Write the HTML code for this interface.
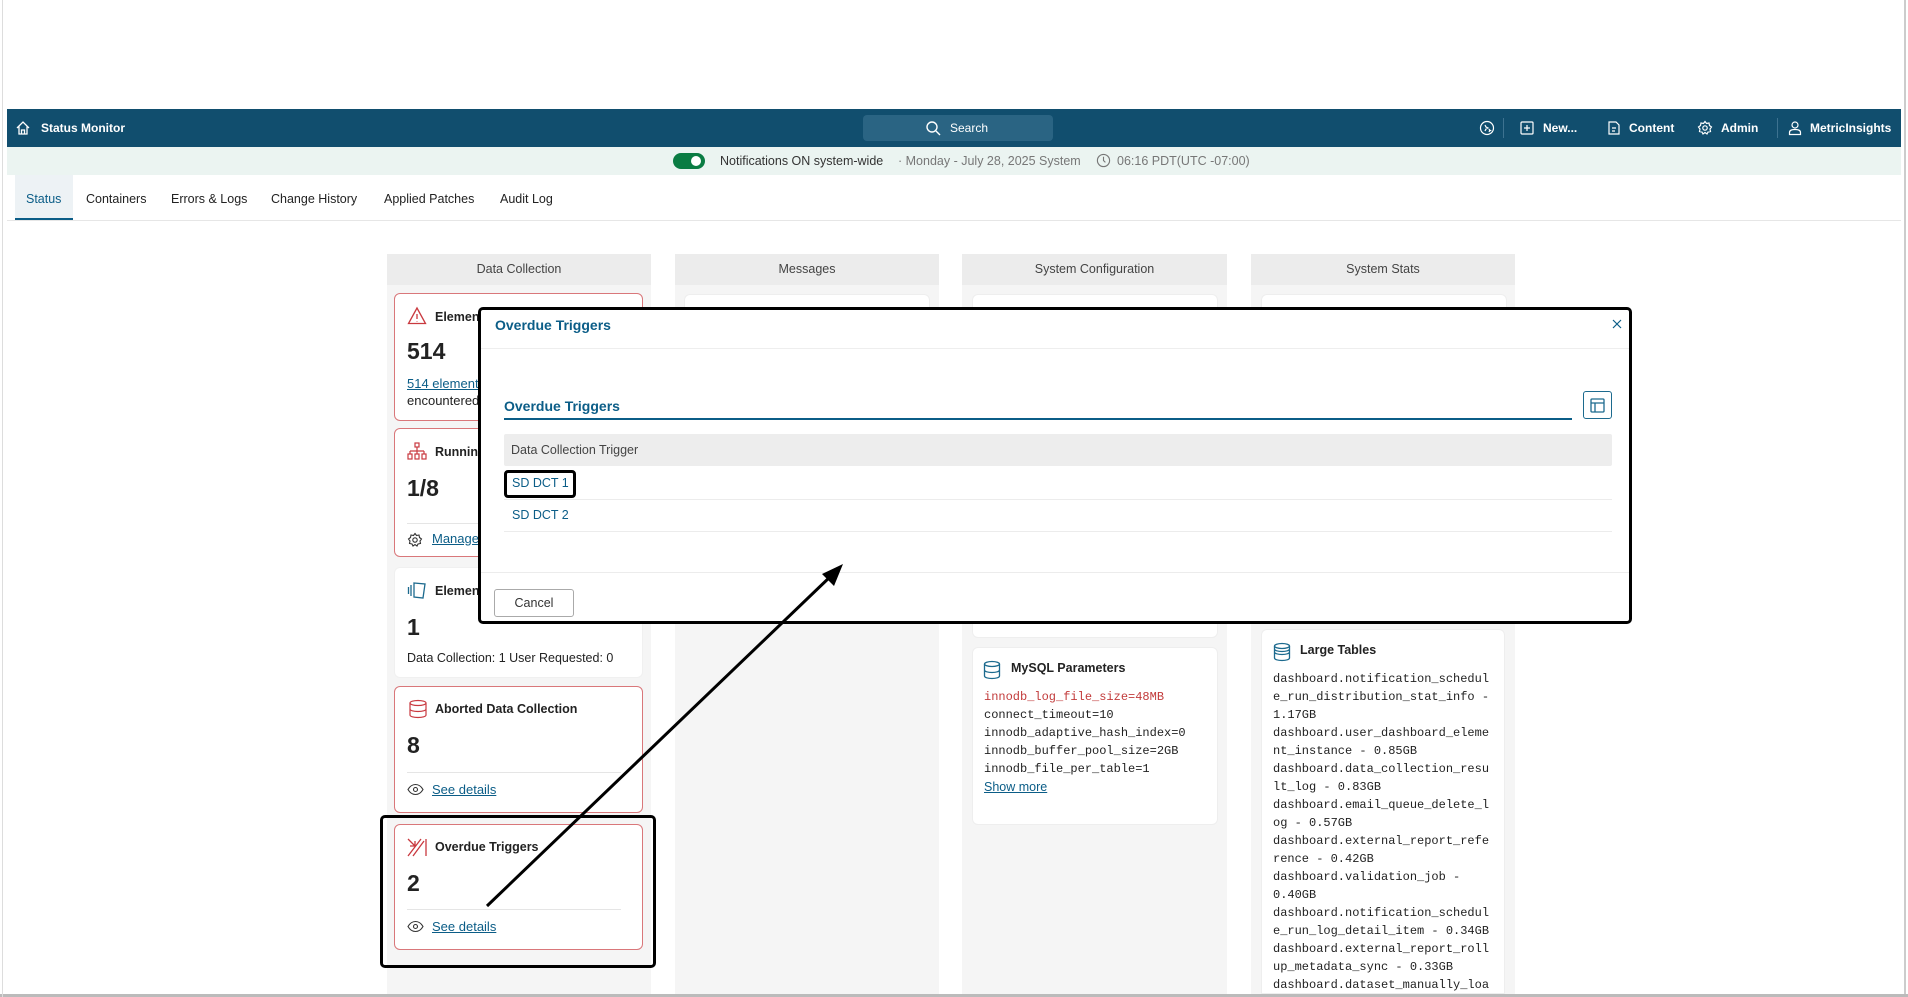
<!DOCTYPE html>
<html><head><meta charset="utf-8"><style>
*{box-sizing:border-box;margin:0;padding:0}
body{width:1908px;height:997px;position:relative;background:#fff;font-family:"Liberation Sans",sans-serif;font-size:13px;color:#222;overflow:hidden}
.a{position:absolute}
.nav{left:7px;top:109px;width:1894px;height:38px;background:#114e6e;color:#fff;font-weight:bold;font-size:12px}
.nav span{position:absolute;top:12px}
.notif{left:7px;top:147px;width:1894px;height:28px;background:#ebf4f1;font-size:12.5px;color:#333}
.tab{top:192px;font-size:12.5px;color:#222}
.col{background:#f5f5f5;width:264px;top:254px;height:740px}
.colh{height:31px;background:#ececec;text-align:center;line-height:31px;font-size:12.5px;color:#444}
.card{background:#fff;border-radius:6px;border:1px solid #eee}
.red{border:1px solid #d9777a}
.ct{font-weight:bold;font-size:12.5px;position:absolute;left:40px;top:16px}
.num{position:absolute;left:12px;font-size:23px;font-weight:bold;color:#222}
.lnk{color:#0b5d87;text-decoration:underline}
.mono{font-family:"Liberation Mono",monospace;font-size:12px;line-height:18px;color:#222}
.modal{left:478px;top:307px;width:1154px;height:317px;background:#fff;border:3px solid #000;border-radius:5px}
</style></head><body>
<div class="a" style="left:1904px;top:0;width:2px;height:997px;background:#ccc"></div>
<div class="a" style="left:0;top:994px;width:1908px;height:3px;background:#bbb"></div>
<div class="a" style="left:2px;top:0;width:1px;height:997px;background:#ddd"></div>

<div class="a nav">
<svg class="a" style="left:8px;top:11px" width="16" height="16" viewBox="0 0 16 16" fill="none" stroke="#fff" stroke-width="1.3"><path d="M2 8L8 2l6 6M4 6.5V14h8V6.5M6.5 14v-4h3v4"/></svg>
<span style="left:34px">Status Monitor</span>
<div class="a" style="left:856px;top:6px;width:190px;height:26px;background:#2a6483;border-radius:4px"></div>
<svg class="a" style="left:918px;top:11px" width="16" height="16" viewBox="0 0 16 16" fill="none" stroke="#fff" stroke-width="1.4"><circle cx="7" cy="7" r="5"/><path d="M11 11l4 4"/></svg>
<span style="left:943px;font-weight:normal">Search</span>
<svg class="a" style="left:1472px;top:11px" width="16" height="16" viewBox="0 0 16 16" fill="none" stroke="#fff" stroke-width="1.2"><circle cx="8" cy="8" r="6.5"/><path d="M6 5l1 2 2 1-2 1-1 2M10 9l.5 1 1 .5-1 .5-.5 1"/></svg>
<div class="a" style="left:1496px;top:9px;width:1px;height:20px;background:#3d7290"></div>
<svg class="a" style="left:1512px;top:11px" width="16" height="16" viewBox="0 0 16 16" fill="none" stroke="#fff" stroke-width="1.2"><rect x="2" y="2" width="12" height="12" rx="1"/><path d="M8 5v6M5 8h6"/></svg>
<span style="left:1536px">New...</span>
<svg class="a" style="left:1599px;top:11px" width="16" height="16" viewBox="0 0 16 16" fill="none" stroke="#fff" stroke-width="1.2"><path d="M3 2h7l3 3v9H3zM6 8h4M6 11h3"/></svg>
<span style="left:1622px">Content</span>
<svg class="a" style="left:1690px;top:11px" width="16" height="16" viewBox="0 0 16 16" fill="none" stroke="#fff" stroke-width="1.2"><circle cx="8" cy="8" r="2.2"/><path d="M8 1.5l1.5 2 2.5-.5.5 2.5 2 1.5-1.5 2 .5 2.5-2.5.5-1 2-2-1.5-2 1.5-1-2-2.5-.5.5-2.5L1.5 7l2-1.5L4 3l2.5.5z"/></svg>
<span style="left:1714px">Admin</span>
<div class="a" style="left:1770px;top:9px;width:1px;height:20px;background:#3d7290"></div>
<svg class="a" style="left:1780px;top:11px" width="16" height="16" viewBox="0 0 16 16" fill="none" stroke="#fff" stroke-width="1.2"><circle cx="8" cy="5" r="3"/><path d="M2.5 14.5v-2c0-2 2-3 5.5-3s5.5 1 5.5 3v2z"/></svg>
<span style="left:1803px">MetricInsights</span>
</div>

<div class="a notif">
<div class="a" style="left:666px;top:6px;width:32px;height:16px;background:#0a7c43;border-radius:8px"><div class="a" style="left:18px;top:3px;width:10px;height:10px;background:#fff;border-radius:50%"></div></div>
<span class="a" style="left:713px;top:7px">Notifications ON system-wide</span>
<span class="a" style="left:891px;top:7px;color:#777">· Monday - July 28, 2025 System</span>
<svg class="a" style="left:1089px;top:6px" width="15" height="15" viewBox="0 0 16 16" fill="none" stroke="#777" stroke-width="1.2"><circle cx="8" cy="8" r="6.5"/><path d="M8 4v4l2 2"/></svg>
<span class="a" style="left:1110px;top:7px;color:#777">06:16 PDT(UTC -07:00)</span>
</div>

<div class="a" style="left:15px;top:175px;width:58px;height:45px;background:#edf2f5;border-bottom:2px solid #0b5d87"></div>
<span class="a tab" style="left:26px;color:#0b5d87">Status</span>
<span class="a tab" style="left:86px">Containers</span>
<span class="a tab" style="left:171px">Errors &amp; Logs</span>
<span class="a tab" style="left:271px">Change History</span>
<span class="a tab" style="left:384px">Applied Patches</span>
<span class="a tab" style="left:500px">Audit Log</span>
<div class="a" style="left:7px;top:220px;width:1894px;height:1px;background:#e6e6e6"></div>

<div class="a col" style="left:387px"><div class="colh">Data Collection</div></div>
<div class="a col" style="left:675px;width:264px"><div class="colh">Messages</div></div>
<div class="a col" style="left:962px;width:265px"><div class="colh">System Configuration</div></div>
<div class="a col" style="left:1251px"><div class="colh">System Stats</div></div>

<div class="a card" style="left:684px;top:294px;width:246px;height:30px"></div>
<div class="a card" style="left:972px;top:294px;width:246px;height:30px"></div>
<div class="a card" style="left:1261px;top:294px;width:246px;height:30px"></div>
<div class="a card" style="left:972px;top:600px;width:246px;height:38px"></div>

<div class="a card red" style="left:394px;top:293px;width:249px;height:128px">
<svg class="a" style="left:12px;top:12px" width="20" height="20" viewBox="0 0 20 20" fill="none" stroke="#c9393f" stroke-width="1.3"><path d="M10 2L1.5 17.5h17z"/><path d="M10 8v5M10 15v.5"/></svg>
<span class="ct">Elements</span><span class="num" style="top:44px">514</span>
<span class="a lnk" style="left:12px;top:82px">514 elements</span><span class="a" style="left:12px;top:99px">encountered</span></div>

<div class="a card red" style="left:394px;top:428px;width:249px;height:129px">
<svg class="a" style="left:12px;top:13px" width="20" height="20" viewBox="0 0 20 20" fill="none" stroke="#c9393f" stroke-width="1.2"><rect x="8" y="1" width="4" height="4"/><path d="M10 5v4M3 9h14M3 9v3M10 9v3M17 9v3"/><rect x="1" y="12" width="4" height="5"/><rect x="8" y="12" width="4" height="5"/><rect x="15" y="12" width="4" height="5"/></svg>
<span class="ct">Running</span><span class="num" style="top:46px">1/8</span>
<div class="a" style="left:12px;top:94px;width:214px;height:1px;background:#e5e5e5"></div>
<svg class="a" style="left:12px;top:103px" width="16" height="16" viewBox="0 0 16 16" fill="none" stroke="#333" stroke-width="1.1"><circle cx="8" cy="8" r="2.2"/><path d="M8 1.5l1.5 2 2.5-.5.5 2.5 2 1.5-1.5 2 .5 2.5-2.5.5-1 2-2-1.5-2 1.5-1-2-2.5-.5.5-2.5L1.5 7l2-1.5L4 3l2.5.5z"/></svg>
<span class="a lnk" style="left:37px;top:102px">Manage</span></div>

<div class="a card" style="left:394px;top:567px;width:249px;height:111px;border-color:#f0f0f0">
<svg class="a" style="left:12px;top:12px" width="20" height="20" viewBox="0 0 20 20" fill="none" stroke="#1c6a8e" stroke-width="1.3"><path d="M7 3l11 1-2 14-9-1zM4 5v11M1.5 7v7"/></svg>
<span class="ct">Elements</span><span class="num" style="top:46px">1</span>
<span class="a" style="left:12px;top:83px;font-size:12.5px">Data Collection: 1 User Requested: 0</span></div>

<div class="a card red" style="left:394px;top:686px;width:249px;height:127px">
<svg class="a" style="left:13px;top:12px" width="20" height="20" viewBox="0 0 20 20" fill="none" stroke="#c9393f" stroke-width="1.2"><ellipse cx="10" cy="4" rx="8" ry="2.5"/><path d="M2 4v12c0 1.5 3.5 2.5 8 2.5s8-1 8-2.5V4M2 10c0 1.5 3.5 2.5 8 2.5s8-1 8-2.5"/></svg>
<span class="ct" style="top:15px">Aborted Data Collection</span><span class="num" style="top:45px">8</span>
<div class="a" style="left:12px;top:85px;width:214px;height:1px;background:#e5e5e5"></div>
<svg class="a" style="left:12px;top:96px" width="17" height="13" viewBox="0 0 17 13" fill="none" stroke="#333" stroke-width="1.1"><path d="M1 6.5C3 3 6 1.5 8.5 1.5S14 3 16 6.5C14 10 11 11.5 8.5 11.5S3 10 1 6.5z"/><circle cx="8.5" cy="6.5" r="2"/></svg>
<span class="a lnk" style="left:37px;top:95px">See details</span></div>

<div class="a card red" style="left:394px;top:824px;width:249px;height:126px">
<svg class="a" style="left:12px;top:12px" width="20" height="20" viewBox="0 0 20 20" fill="none" stroke="#c9393f" stroke-width="1.3"><path d="M1 2l7 7M8 4v5H3M1 19L14 2M6 19L17 4M19 2v17"/></svg>
<span class="ct" style="top:15px">Overdue Triggers</span><span class="num" style="top:45px">2</span>
<div class="a" style="left:12px;top:84px;width:214px;height:1px;background:#e5e5e5"></div>
<svg class="a" style="left:12px;top:95px" width="17" height="13" viewBox="0 0 17 13" fill="none" stroke="#333" stroke-width="1.1"><path d="M1 6.5C3 3 6 1.5 8.5 1.5S14 3 16 6.5C14 10 11 11.5 8.5 11.5S3 10 1 6.5z"/><circle cx="8.5" cy="6.5" r="2"/></svg>
<span class="a lnk" style="left:37px;top:94px">See details</span></div>
<div class="a" style="left:380px;top:815px;width:276px;height:153px;border:3px solid #000;border-radius:5px"></div>

<div class="a card" style="left:972px;top:647px;width:246px;height:178px">
<svg class="a" style="left:10px;top:12px" width="18" height="20" viewBox="0 0 18 20" fill="none" stroke="#1c6a8e" stroke-width="1.3"><ellipse cx="9" cy="4" rx="7.5" ry="2.5"/><path d="M1.5 4v12c0 1.5 3.4 2.5 7.5 2.5s7.5-1 7.5-2.5V4M1.5 10c0 1.5 3.4 2.5 7.5 2.5s7.5-1 7.5-2.5"/></svg>
<span class="ct" style="left:38px;top:13px">MySQL Parameters</span>
<div class="a mono" style="left:11px;top:40px"><span style="color:#c23b3b">innodb_log_file_size=48MB</span><br>connect_timeout=10<br>innodb_adaptive_hash_index=0<br>innodb_buffer_pool_size=2GB<br>innodb_file_per_table=1<br><span class="lnk" style="font-family:'Liberation Sans',sans-serif;font-size:12.5px">Show more</span></div></div>

<div class="a card" style="left:1261px;top:629px;width:244px;height:365px;overflow:hidden;border-radius:6px 6px 0 0">
<svg class="a" style="left:11px;top:12px" width="18" height="20" viewBox="0 0 18 20" fill="none" stroke="#1c6a8e" stroke-width="1.3"><ellipse cx="9" cy="4" rx="7.5" ry="2.5"/><path d="M1.5 4v12c0 1.5 3.4 2.5 7.5 2.5s7.5-1 7.5-2.5V4M1.5 10c0 1.5 3.4 2.5 7.5 2.5s7.5-1 7.5-2.5M1.5 7c0 1.5 3.4 2.5 7.5 2.5s7.5-1 7.5-2.5"/></svg>
<span class="ct" style="left:38px;top:13px">Large Tables</span>
<div class="a mono" style="left:11px;top:40px;white-space:pre">dashboard.notification_schedul
e_run_distribution_stat_info -
1.17GB
dashboard.user_dashboard_eleme
nt_instance - 0.85GB
dashboard.data_collection_resu
lt_log - 0.83GB
dashboard.email_queue_delete_l
og - 0.57GB
dashboard.external_report_refe
rence - 0.42GB
dashboard.validation_job -
0.40GB
dashboard.notification_schedul
e_run_log_detail_item - 0.34GB
dashboard.external_report_roll
up_metadata_sync - 0.33GB
dashboard.dataset_manually_loa</div></div>

<div class="a modal">
<span class="a" style="left:14px;top:7px;font-size:14px;font-weight:bold;color:#0b5d87">Overdue Triggers</span>
<svg class="a" style="left:1130px;top:8px" width="12" height="12" viewBox="0 0 12 12" stroke="#0b5d87" stroke-width="1.2"><path d="M2 2l8 8M10 2l-8 8"/></svg>
<div class="a" style="left:0;top:38px;width:1148px;height:1px;background:#eee"></div>
<span class="a" style="left:23px;top:88px;font-size:14px;font-weight:bold;color:#0b5d87">Overdue Triggers</span>
<div class="a" style="left:23px;top:108px;width:1068px;height:1.5px;background:#0b5d87"></div>
<div class="a" style="left:1102px;top:81px;width:29px;height:28px;border:1px solid #1c6a8e;border-radius:3px"><svg class="a" style="left:6px;top:6px" width="15" height="15" viewBox="0 0 15 15" fill="none" stroke="#1c6a8e" stroke-width="1.3"><rect x="1" y="1" width="13" height="13" rx="1"/><path d="M1 5h13M5 5v9"/></svg></div>
<div class="a" style="left:23px;top:124px;width:1108px;height:32px;background:#ededed;border-radius:2px"><span class="a" style="left:7px;top:9px;font-size:12.5px;color:#444">Data Collection Trigger</span></div>
<span class="a" style="left:31px;top:166px;font-size:12.5px;color:#0b5d87">SD DCT 1</span>
<div class="a" style="left:23px;top:160px;width:72px;height:28px;border:3px solid #000;border-radius:4px"></div>
<div class="a" style="left:23px;top:189px;width:1108px;height:1px;background:#ececec"></div>
<span class="a" style="left:31px;top:198px;font-size:12.5px;color:#0b5d87">SD DCT 2</span>
<div class="a" style="left:23px;top:221px;width:1108px;height:1px;background:#ececec"></div>
<div class="a" style="left:0;top:262px;width:1148px;height:1px;background:#ececec"></div>
<div class="a" style="left:13px;top:279px;width:80px;height:28px;border:1px solid #aaa;border-radius:3px;text-align:center;line-height:26px;font-size:12.5px;color:#333">Cancel</div>
</div>

<svg class="a" style="left:0;top:0" width="1908" height="997"><line x1="487" y1="906" x2="832" y2="575" stroke="#000" stroke-width="3"/><path d="M843 564L822 574L834 586Z" fill="#000"/></svg>
</body></html>
